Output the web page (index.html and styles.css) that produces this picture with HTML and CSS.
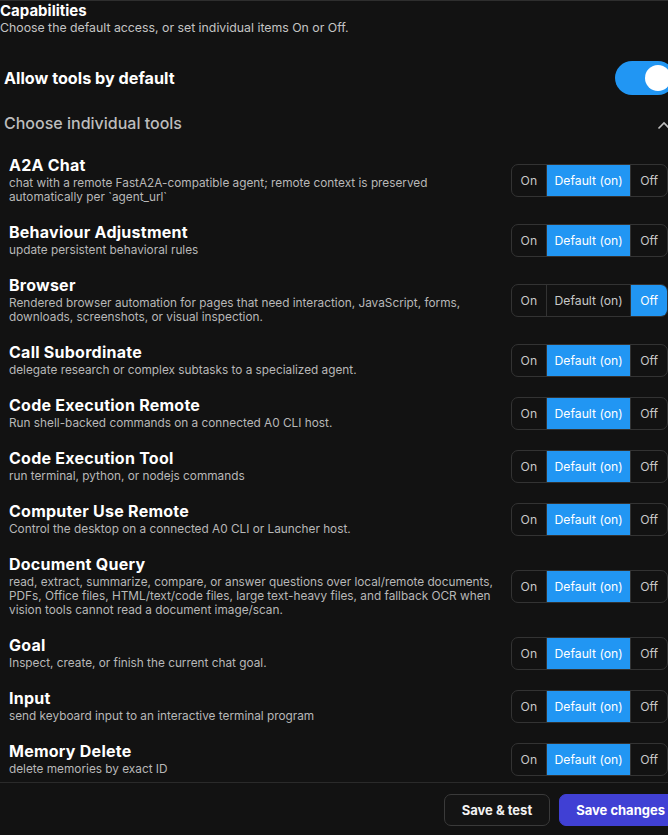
FILE: index.html
```html
<!DOCTYPE html>
<html lang="en">
<head>
<meta charset="utf-8">
<title>Capabilities</title>
<link rel="stylesheet" href="styles.css">
</head>
<body>
<div class="panel">
  <div class="caps-head">
    <h3 class="caps-title">Capabilities</h3>
    <p class="caps-sub">Choose the default access, or set individual items On or Off.</p>
  </div>

  <div class="default-row">
    <span class="default-label">Allow tools by default</span>
    <span class="toggle"><span class="knob"></span></span>
  </div>

  <div class="tools-head">
    <span class="tools-label">Choose individual tools</span>
    <svg class="chevron" width="14" height="9" viewBox="0 0 14 9"><path d="M1.5 7.5 L7 2 L12.5 7.5" fill="none" stroke="#bdbdbd" stroke-width="1.6"/></svg>
  </div>

  <div class="tool-list">
    <div class="tool">
      <div class="tool-text">
        <div class="tool-name">A2A Chat</div>
        <div class="tool-desc">chat with a remote FastA2A-compatible agent; remote context is preserved automatically per `agent_url`</div>
      </div>
      <div class="seg"><span class="opt">On</span><span class="opt mid sel">Default (on)</span><span class="opt">Off</span></div>
    </div>
    <div class="tool">
      <div class="tool-text">
        <div class="tool-name">Behaviour Adjustment</div>
        <div class="tool-desc">update persistent behavioral rules</div>
      </div>
      <div class="seg"><span class="opt">On</span><span class="opt mid sel">Default (on)</span><span class="opt">Off</span></div>
    </div>
    <div class="tool">
      <div class="tool-text">
        <div class="tool-name">Browser</div>
        <div class="tool-desc">Rendered browser automation for pages that need interaction, JavaScript, forms, downloads, screenshots, or visual inspection.</div>
      </div>
      <div class="seg"><span class="opt">On</span><span class="opt mid">Default (on)</span><span class="opt sel">Off</span></div>
    </div>
    <div class="tool">
      <div class="tool-text">
        <div class="tool-name">Call Subordinate</div>
        <div class="tool-desc">delegate research or complex subtasks to a specialized agent.</div>
      </div>
      <div class="seg"><span class="opt">On</span><span class="opt mid sel">Default (on)</span><span class="opt">Off</span></div>
    </div>
    <div class="tool">
      <div class="tool-text">
        <div class="tool-name">Code Execution Remote</div>
        <div class="tool-desc">Run shell-backed commands on a connected A0 CLI host.</div>
      </div>
      <div class="seg"><span class="opt">On</span><span class="opt mid sel">Default (on)</span><span class="opt">Off</span></div>
    </div>
    <div class="tool">
      <div class="tool-text">
        <div class="tool-name">Code Execution Tool</div>
        <div class="tool-desc">run terminal, python, or nodejs commands</div>
      </div>
      <div class="seg"><span class="opt">On</span><span class="opt mid sel">Default (on)</span><span class="opt">Off</span></div>
    </div>
    <div class="tool">
      <div class="tool-text">
        <div class="tool-name">Computer Use Remote</div>
        <div class="tool-desc">Control the desktop on a connected A0 CLI or Launcher host.</div>
      </div>
      <div class="seg"><span class="opt">On</span><span class="opt mid sel">Default (on)</span><span class="opt">Off</span></div>
    </div>
    <div class="tool">
      <div class="tool-text">
        <div class="tool-name">Document Query</div>
        <div class="tool-desc">read, extract, summarize, compare, or answer questions over local/remote documents, PDFs, Office files, HTML/text/code files, large text-heavy files, and fallback OCR when vision tools cannot read a document image/scan.</div>
      </div>
      <div class="seg"><span class="opt">On</span><span class="opt mid sel">Default (on)</span><span class="opt">Off</span></div>
    </div>
    <div class="tool">
      <div class="tool-text">
        <div class="tool-name">Goal</div>
        <div class="tool-desc">Inspect, create, or finish the current chat goal.</div>
      </div>
      <div class="seg"><span class="opt">On</span><span class="opt mid sel">Default (on)</span><span class="opt">Off</span></div>
    </div>
    <div class="tool">
      <div class="tool-text">
        <div class="tool-name">Input</div>
        <div class="tool-desc">send keyboard input to an interactive terminal program</div>
      </div>
      <div class="seg"><span class="opt">On</span><span class="opt mid sel">Default (on)</span><span class="opt">Off</span></div>
    </div>
    <div class="tool">
      <div class="tool-text">
        <div class="tool-name">Memory Delete</div>
        <div class="tool-desc">delete memories by exact ID</div>
      </div>
      <div class="seg"><span class="opt">On</span><span class="opt mid sel">Default (on)</span><span class="opt">Off</span></div>
    </div>
  </div>

  <div class="footer">
    <button class="btn btn-ghost">Save &amp; test</button>
    <button class="btn btn-primary">Save changes</button>
  </div>
</div>
</body>
</html>
```

FILE: styles.css
```css
html, body {
  margin: 0;
  padding: 0;
  background: #121212;
  overflow: hidden;
  height: 835px;
}

body {
  font-family: Inter, "Noto Sans", sans-serif;
  color: #e8e8e8;
}

.panel {
  width: 682px;
  height: 835px;
  border-top: 1px solid #2e2e2e;
  box-sizing: border-box;
  display: flex;
  flex-direction: column;
}

.caps-head {
  padding: 1px 0 0 0;
}

.caps-title {
  margin: 0;
  font-size: 15px;
  line-height: 18px;
  font-weight: 700;
  color: #ffffff;
}

.caps-sub {
  margin: 0;
  font-size: 12.3px;
  line-height: 15px;
  color: #c4c4c4;
}

.default-row {
  display: flex;
  align-items: center;
  justify-content: space-between;
  margin-top: 26px;
  padding-left: 4px;
  padding-right: 7px;
}

.default-label {
  font-size: 16.2px;
  font-weight: 700;
  color: #ffffff;
}

.toggle {
  width: 60px;
  height: 34px;
  border-radius: 17px;
  background: #2196f3;
  display: flex;
  align-items: center;
  justify-content: flex-end;
  padding-right: 4px;
  box-sizing: border-box;
}

.knob {
  width: 26px;
  height: 26px;
  border-radius: 50%;
  background: #ffffff;
}

.tools-head {
  display: flex;
  align-items: center;
  justify-content: space-between;
  margin-top: 16px;
  padding-left: 4px;
  padding-right: 11px;
  height: 24px;
}

.tools-label {
  font-size: 16px;
  font-weight: 500;
  color: #bdbdbd;
}

.chevron {
  margin-top: 4px;
}

.tool-list {
  margin-top: 11px;
  padding: 0 14px 0 9px;
  flex: 1;
  overflow: hidden;
}

.tool {
  display: flex;
  align-items: center;
  justify-content: space-between;
  gap: 16px;
  padding: 10px 0 9px 0;
}

.tool-text {
  flex: 1;
  min-width: 0;
}

.tool-name {
  font-size: 16px;
  line-height: 18px;
  font-weight: 700;
  letter-spacing: 0.25px;
  color: #ffffff;
}

.tool-desc {
  margin-top: 2px;
  font-size: 11.8px;
  line-height: 14px;
  color: #b8b8b8;
}

.seg {
  display: flex;
  height: 33px;
  box-sizing: border-box;
  border: 1px solid #333333;
  border-radius: 7px;
  overflow: hidden;
  flex-shrink: 0;
}

.opt {
  display: flex;
  align-items: center;
  justify-content: center;
  font-size: 12.2px;
  color: #c8c8c8;
  padding: 0 9px;
}

.opt.mid {
  width: 85px;
  box-sizing: border-box;
  padding: 0;
  border-left: 1px solid #333333;
  border-right: 1px solid #333333;
}

.opt.sel {
  background: #2196f3;
  color: #ffffff;
}

.footer {
  border-top: 1px solid #2a2a2a;
  display: flex;
  justify-content: flex-end;
  gap: 9px;
  padding: 11px 0 9px 0;
}

.btn {
  font-family: inherit;
  font-size: 13px;
  font-weight: 700;
  height: 32px;
  border-radius: 7px;
  padding: 0 16px;
  cursor: pointer;
}

.btn-ghost {
  background: #141414;
  color: #f2f2f2;
  border: 1px solid #3a3a3a;
  padding: 0 17px;
}

.btn-primary {
  background: #4040d4;
  color: #ffffff;
  border: 1px solid #4040d4;
}
```
